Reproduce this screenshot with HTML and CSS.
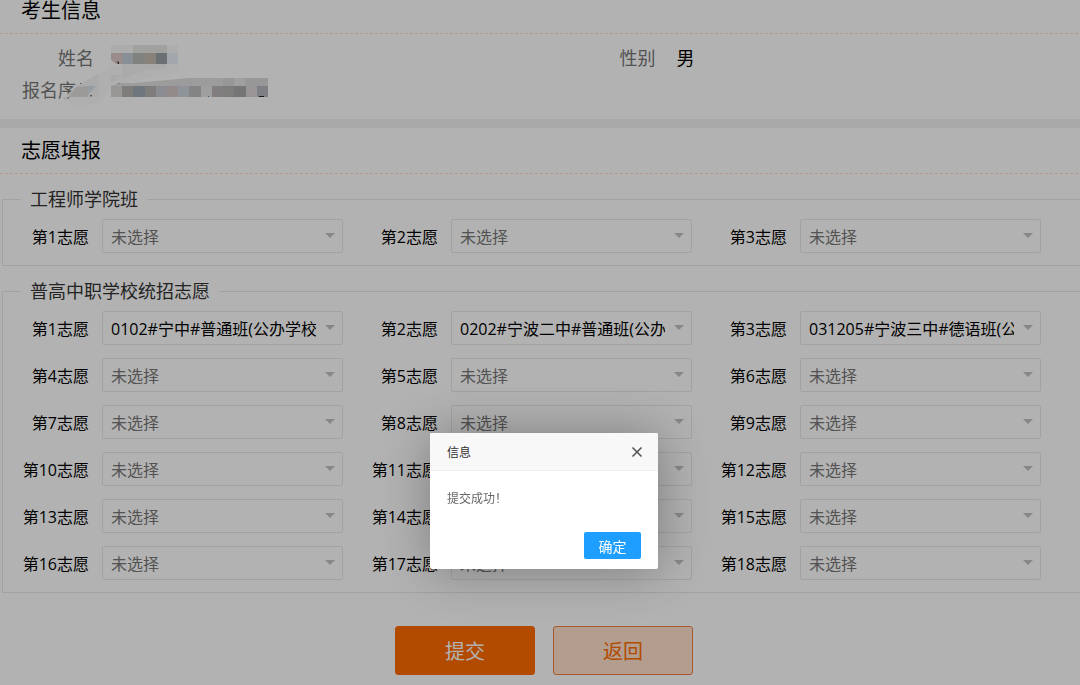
FILE: index.html
```
<!DOCTYPE html>
<html lang="zh-CN">
<head>
<meta charset="utf-8">
<title>志愿填报</title>
<link rel="stylesheet" href="styles.css">
</head>
<body>
<div class="page">
  <section class="panel panel-info">
    <h2 class="panel-title">考生信息</h2>
    <dl class="info">
      <div class="info-item"><dt>姓名</dt><dd></dd></div>
      <div class="info-item"><dt>性别</dt><dd>男</dd></div>
      <div class="info-item"><dt>报名序<span class="blank"></span></dt><dd></dd></div>
    </dl>
    <!-- private values are masked -->
    <svg class="mask" width="210" height="70" viewBox="0 0 210 70" aria-hidden="true">
      <path fill="#fbfbfb" d="M39 31L52 24L75 20L118 22L118 30L52 44L40 60L14 68L8 57Z"/>
      <path fill="#f4f4f4" d="M18 43L39 31V55H8L6 60L4 56Z"/>
      <path fill="#e0dddc" d="M16 45L28 44V55H9Z"/>
      <path fill="#d9e0e8" d="M28 44h8l-8 9z"/>
      <path fill="#555" d="M30 53l2 0l-1 2zM20 41l2 1h-2z"/>
      <g>
        <rect x="51" y="3" width="22" height="8" fill="#f5f6f5"/>
        <rect x="73" y="3" width="34" height="8" fill="#e6e8e6"/>
        <rect x="107" y="3" width="11" height="8" fill="#f8f8f8"/>
        <path fill="#dfc9c9" d="M51 11h11v11h-6l-5-4z"/>
        <rect x="62" y="11" width="11" height="11" fill="#c5cfd6"/>
        <rect x="73" y="11" width="12" height="11" fill="#b7bbb5"/>
        <rect x="85" y="11" width="11" height="11" fill="#c5bab1"/>
        <rect x="96" y="11" width="11" height="11" fill="#9aa1a4"/>
        <rect x="107" y="11" width="11" height="11" fill="#e7eff7"/>
        <path fill="#f2f4f2" d="M62 22h44v4l-20 2l-24 9z"/>
        <path fill="#333" d="M57 19l2 1v2h-1zM58 41h2l-2 2z"/>
        <path fill="#f1f3f1" d="M51 33h10l-10 8z"/>
      </g>
      <g>
        <path fill="#e0e0e0" d="M73 41L107 38L129 36H163V44H51L60 41Z"/>
        <path fill="#d8d8d8" d="M163 36h11v8h-11zM185 36h23v8h-23z"/>
        <rect x="174" y="36" width="11" height="8" fill="#e6e6e6"/>
        <rect x="51" y="44" width="11" height="11" fill="#dbd8d7"/>
        <rect x="62" y="44" width="11" height="11" fill="#b5b3b1"/>
        <rect x="73" y="44" width="12" height="11" fill="#9fa9b4"/>
        <rect x="85" y="44" width="11" height="11" fill="#b7b4b1"/>
        <rect x="96" y="44" width="11" height="11" fill="#c7c9d1"/>
        <rect x="107" y="44" width="11" height="11" fill="#d2c8c4"/>
        <rect x="118" y="44" width="11" height="11" fill="#ccd5dc"/>
        <rect x="129" y="44" width="12" height="11" fill="#bebebe"/>
        <rect x="141" y="44" width="11" height="11" fill="#e4e4e4"/>
        <rect x="152" y="44" width="11" height="11" fill="#bbb5b7"/>
        <rect x="163" y="44" width="11" height="11" fill="#b4b4b0"/>
        <rect x="174" y="44" width="12" height="11" fill="#a9a9a9"/>
        <rect x="186" y="44" width="11" height="11" fill="#dbd5d6"/>
        <rect x="197" y="44" width="11" height="11" fill="#b5b7be"/>
        <path fill="#222" d="M199 54h5v1h-5z"/>
        <path fill="#4a86c0" d="M148 54h1v1h-1z"/>
      </g>
    </svg>
  </section>

  <section class="panel">
    <h2 class="panel-title">志愿填报</h2>
    <form class="wish-form">
      <fieldset>
        <legend>工程师学院班</legend>
        <div class="wishes">
          <div class="wish"><label for="a1">第1志愿</label><div class="select"><select id="a1" class="empty"><option>未选择</option></select></div></div>
          <div class="wish"><label for="a2">第2志愿</label><div class="select"><select id="a2" class="empty"><option>未选择</option></select></div></div>
          <div class="wish"><label for="a3">第3志愿</label><div class="select"><select id="a3" class="empty"><option>未选择</option></select></div></div>
        </div>
      </fieldset>

      <fieldset>
        <legend>普高中职学校统招志愿</legend>
        <div class="wishes">
          <div class="wish"><label for="b1">第1志愿</label><div class="select"><select id="b1"><option>0102#宁中#普通班(公办学校</option></select></div></div>
          <div class="wish"><label for="b2">第2志愿</label><div class="select"><select id="b2"><option>0202#宁波二中#普通班(公办</option></select></div></div>
          <div class="wish"><label for="b3">第3志愿</label><div class="select"><select id="b3"><option>031205#宁波三中#德语班(公</option></select></div></div>
          <div class="wish"><label for="b4">第4志愿</label><div class="select"><select id="b4" class="empty"><option>未选择</option></select></div></div>
          <div class="wish"><label for="b5">第5志愿</label><div class="select"><select id="b5" class="empty"><option>未选择</option></select></div></div>
          <div class="wish"><label for="b6">第6志愿</label><div class="select"><select id="b6" class="empty"><option>未选择</option></select></div></div>
          <div class="wish"><label for="b7">第7志愿</label><div class="select"><select id="b7" class="empty"><option>未选择</option></select></div></div>
          <div class="wish"><label for="b8">第8志愿</label><div class="select"><select id="b8" class="empty"><option>未选择</option></select></div></div>
          <div class="wish"><label for="b9">第9志愿</label><div class="select"><select id="b9" class="empty"><option>未选择</option></select></div></div>
          <div class="wish"><label for="b10">第10志愿</label><div class="select"><select id="b10" class="empty"><option>未选择</option></select></div></div>
          <div class="wish"><label for="b11">第11志愿</label><div class="select"><select id="b11" class="empty"><option>未选择</option></select></div></div>
          <div class="wish"><label for="b12">第12志愿</label><div class="select"><select id="b12" class="empty"><option>未选择</option></select></div></div>
          <div class="wish"><label for="b13">第13志愿</label><div class="select"><select id="b13" class="empty"><option>未选择</option></select></div></div>
          <div class="wish"><label for="b14">第14志愿</label><div class="select"><select id="b14" class="empty"><option>未选择</option></select></div></div>
          <div class="wish"><label for="b15">第15志愿</label><div class="select"><select id="b15" class="empty"><option>未选择</option></select></div></div>
          <div class="wish"><label for="b16">第16志愿</label><div class="select"><select id="b16" class="empty"><option>未选择</option></select></div></div>
          <div class="wish"><label for="b17">第17志愿</label><div class="select"><select id="b17" class="empty"><option>未选择</option></select></div></div>
          <div class="wish"><label for="b18">第18志愿</label><div class="select"><select id="b18" class="empty"><option>未选择</option></select></div></div>
        </div>
      </fieldset>

      <div class="actions">
        <button type="submit" class="btn btn-primary">提交</button>
        <button type="button" class="btn btn-back">返回</button>
      </div>
    </form>
  </section>

  <div class="shade"></div>
  <div class="dialog" role="dialog" aria-labelledby="dialog-title">
    <div class="dialog-header">
      <span id="dialog-title">信息</span>
      <button type="button" class="dialog-close" aria-label="关闭">
        <svg width="12" height="12" viewBox="0 0 12 12"><path d="M1.5 1.5L10.5 10.5M10.5 1.5L1.5 10.5" stroke="#555" stroke-width="1.6" fill="none"/></svg>
      </button>
    </div>
    <p class="dialog-body">提交成功！</p>
    <div class="dialog-footer">
      <button type="button" class="dialog-ok">确定</button>
    </div>
  </div>
</div>
</body>
</html>
```
FILE: styles.css
```
* {
  box-sizing: border-box;
}

body {
  margin: 0;
  overflow: hidden;
  background: #fff;
  color: #000;
  font-family: "Open Sans", "Noto Sans CJK SC", sans-serif;
  font-size: 16px;
}

button,
select {
  font-family: inherit;
}

/* the form is a little wider than the window */
.page {
  display: flow-root;
  position: relative;
  margin-right: -8px;
}

.panel {
  position: relative;
}

.panel-info {
  margin-top: -12px;
  padding-bottom: 13px;
  border-bottom: 9px solid #f2f2f2;
}

.panel-title {
  margin: 0;
  padding-left: 21px;
  font-size: 20px;
  font-weight: normal;
  line-height: 45px;
  border-bottom: 1px dashed #ffdcc4;
}

.info {
  display: grid;
  grid-template-columns: 16fr 15fr;
  margin: 0;
  padding-top: 8px;
  font-size: 18px;
  line-height: 32px;
}

.info-item {
  display: flex;
}

.info dt {
  width: 94px;
  text-align: right;
  color: #777;
}

.info dd {
  margin: 0;
  padding-left: 21px;
}

.blank {
  display: inline-block;
  width: 18px;
}

.mask {
  position: absolute;
  left: 60px;
  top: 54px;
}

.wish-form {
  padding: 13px 2px 0;
}

fieldset {
  min-width: 0;
  margin: 0 0 13px;
  padding: 8px 35px 12px 0;
  border: 1px solid #e9e9e9;
}

legend {
  margin-left: 18px;
  padding: 0 9px;
  font-size: 18px;
  line-height: 24px;
  color: #333;
}

.wishes {
  display: grid;
  grid-template-columns: repeat(3, 1fr);
  row-gap: 13px;
}

.wish {
  display: flex;
  align-items: center;
  padding-right: 9px;
}

.wish label {
  width: 99px;
  padding-right: 13px;
  text-align: right;
}

.select {
  position: relative;
  flex: 1;
  min-width: 0;
}

.select::after {
  content: "";
  position: absolute;
  right: 8px;
  top: 14px;
  border: 5px solid transparent;
  border-top-color: #c2c2c2;
  border-bottom: 0;
  pointer-events: none;
}

.select select {
  display: block;
  width: 100%;
  height: 34px;
  padding: 2px 26px 0 8px;
  border: 1px solid #e9e9e9;
  border-radius: 2px;
  background: transparent;
  color: #000;
  font-size: 16px;
  appearance: none;
}

.select .empty {
  color: #777;
}

.actions {
  display: flex;
  justify-content: center;
  gap: 18px;
  padding: 20px 0 11px;
}

.btn {
  width: 140px;
  height: 49px;
  padding: 0;
  border: 1px solid #ff6a00;
  border-radius: 3px;
  font-size: 20px;
}

.btn-primary {
  background: #ff6a00;
  color: #fff;
}

.btn-back {
  background: #ffe1cd;
  border-color: #f08040;
  color: #ff6a00;
}

.shade {
  position: fixed;
  inset: 0;
  background: rgba(0, 0, 0, 0.3);
}

.dialog {
  position: absolute;
  left: 50%;
  top: 433px;
  width: 228px;
  transform: translateX(-50%);
  border-radius: 2px;
  background: #fff;
  box-shadow: 1px 1px 50px rgba(0, 0, 0, 0.3);
  color: #333;
  font-size: 12px;
}

.dialog-header {
  display: flex;
  align-items: center;
  justify-content: space-between;
  height: 38px;
  padding: 0 15px 0 17px;
  border-bottom: 1px solid #eee;
  border-radius: 2px 2px 0 0;
  background: #f8f8f8;
}

.dialog-close {
  display: flex;
  padding: 0;
  border: 0;
  background: none;
}

.dialog-body {
  margin: 0;
  padding: 18px 17px;
  line-height: 20px;
  color: #666;
}

.dialog-footer {
  padding: 5px 17px 10px;
  text-align: right;
}

.dialog-ok {
  display: inline-block;
  width: 57px;
  height: 27px;
  padding: 0;
  border: 0;
  border-radius: 2px;
  background: #1e9fff;
  color: #fff;
  font-size: 14px;
  vertical-align: top;
}
```
